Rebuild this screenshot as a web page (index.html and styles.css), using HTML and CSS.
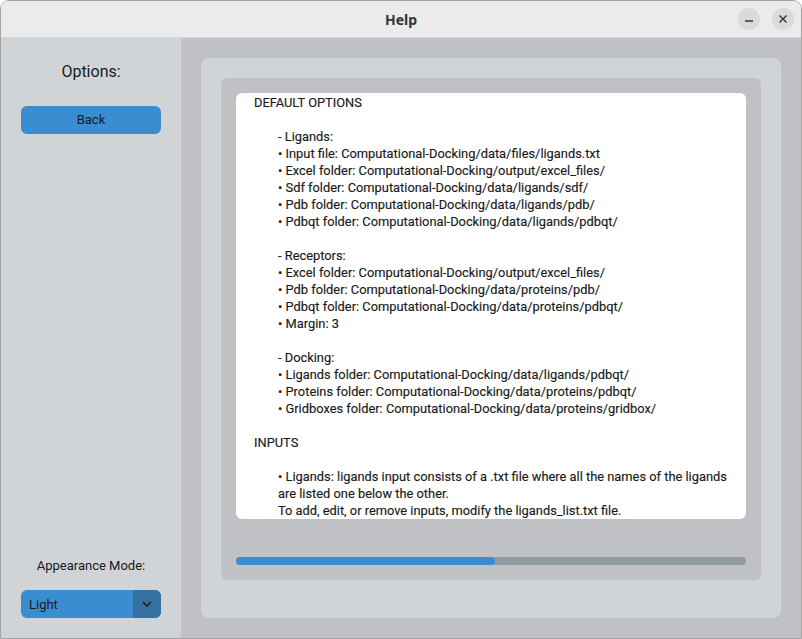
FILE: index.html
```html
<!DOCTYPE html>
<html>
<head>
<meta charset="utf-8">
<link rel="stylesheet" href="styles.css">
</head>
<body>
<div class="window">
  <div class="titlebar">
    <span class="title">Help</span>
    <div class="controls">
      <span class="ctl"><svg width="10" height="10" viewBox="0 0 10 10"><line x1="1" y1="7" x2="9" y2="7" stroke="#333" stroke-width="1.4"/></svg></span>
      <span class="ctl"><svg width="10" height="10" viewBox="0 0 10 10"><path d="M1.5 1.5 L8.5 8.5 M8.5 1.5 L1.5 8.5" stroke="#333" stroke-width="1.4" fill="none"/></svg></span>
    </div>
  </div>
  <div class="body">
    <aside class="sidebar">
      <div class="side-title">Options:</div>
      <div class="btn">Back</div>
      <div class="spacer"></div>
      <div class="mode-label">Appearance Mode:</div>
      <div class="select">
        <span class="select-text">Light</span>
        <span class="select-arrow"><svg width="10" height="6" viewBox="0 0 10 6"><path d="M1 1 L5 5 L9 1" stroke="#1a1a1a" stroke-width="1.5" fill="none"/></svg></span>
      </div>
    </aside>
    <main class="content">
      <div class="frame">
        <div class="inner">
          <div class="textbox">
            <div class="line h">DEFAULT OPTIONS</div>
            <div class="line"></div>
            <div class="line ind">- Ligands:</div>
            <div class="line ind">• Input file: Computational-Docking/data/files/ligands.txt</div>
            <div class="line ind">• Excel folder: Computational-Docking/output/excel_files/</div>
            <div class="line ind">• Sdf folder: Computational-Docking/data/ligands/sdf/</div>
            <div class="line ind">• Pdb folder: Computational-Docking/data/ligands/pdb/</div>
            <div class="line ind">• Pdbqt folder: Computational-Docking/data/ligands/pdbqt/</div>
            <div class="line"></div>
            <div class="line ind">- Receptors:</div>
            <div class="line ind">• Excel folder: Computational-Docking/output/excel_files/</div>
            <div class="line ind">• Pdb folder: Computational-Docking/data/proteins/pdb/</div>
            <div class="line ind">• Pdbqt folder: Computational-Docking/data/proteins/pdbqt/</div>
            <div class="line ind">• Margin: 3</div>
            <div class="line"></div>
            <div class="line ind">- Docking:</div>
            <div class="line ind">• Ligands folder: Computational-Docking/data/ligands/pdbqt/</div>
            <div class="line ind">• Proteins folder: Computational-Docking/data/proteins/pdbqt/</div>
            <div class="line ind">• Gridboxes folder: Computational-Docking/data/proteins/gridbox/</div>
            <div class="line"></div>
            <div class="line h">INPUTS</div>
            <div class="line"></div>
            <div class="line ind">• Ligands: ligands input consists of a .txt file where all the names of the ligands</div>
            <div class="line ind">are listed one below the other.</div>
            <div class="line ind">To add, edit, or remove inputs, modify the ligands_list.txt file.</div>
            <div class="line ind">&nbsp;</div>
          </div>
          <div class="progress"><div class="fill" style="width:50.8%"></div></div>
        </div>
      </div>
    </main>
  </div>
</div>
</body>
</html>
```

FILE: styles.css
```css
* { box-sizing: border-box; }
html, body { margin: 0; padding: 0; background: #ffffff; }
.window {
  width: 802px;
  height: 639px;
  border: 1px solid #a3a3a3;
  border-radius: 9px 9px 0 0;
  overflow: hidden;
  display: flex;
  flex-direction: column;
  font-family: Roboto, "Liberation Sans", sans-serif;
  color: #1a1a1a;
}
.titlebar {
  height: 37px;
  flex: none;
  background: #ebebeb;
  border-bottom: 1px solid #d6d6d6;
  display: flex;
  align-items: center;
  justify-content: center;
  position: relative;
}
.title {
  font-family: "Noto Sans", sans-serif;
  font-weight: 700;
  font-size: 14px;
  color: #333333;
}
.controls {
  position: absolute;
  right: 7px;
  top: 7px;
  display: flex;
  gap: 12px;
}
.ctl {
  width: 22px;
  height: 22px;
  border-radius: 50%;
  background: #dadada;
  display: flex;
  align-items: center;
  justify-content: center;
}
.body {
  flex: 1;
  display: flex;
  min-height: 0;
}
.sidebar {
  width: 180px;
  flex: none;
  background: #d1d4d7;
  display: flex;
  flex-direction: column;
  align-items: center;
  padding: 24px 0 20px;
}
.side-title {
  font-size: 16px;
  line-height: 20px;
  height: 20px;
}
.btn {
  margin-top: 24px;
  width: 140px;
  height: 28px;
  border-radius: 6px;
  background: #3a8dd0;
  font-size: 13px;
  display: flex;
  align-items: center;
  justify-content: center;
  padding-bottom: 1px;
}
.spacer { flex: 1; }
.mode-label {
  font-size: 13px;
  line-height: 16px;
  padding-top: 1px;
}
.select {
  margin-top: 16px;
  width: 140px;
  height: 28px;
  border-radius: 6px;
  background: #3a8dd0;
  display: flex;
  overflow: hidden;
}
.select-text {
  flex: 1;
  font-size: 13px;
  display: flex;
  align-items: center;
  padding-left: 8px;
}
.select-arrow {
  width: 28px;
  background: #36719f;
  display: flex;
  align-items: center;
  justify-content: center;
}
.content {
  flex: 1;
  background: #c0c1c4;
  padding: 20px;
}
.frame {
  height: 100%;
  background: #d1d4d7;
  border-radius: 8px;
  padding: 20px 20px 38px;
}
.inner {
  height: 100%;
  background: #c0c1c4;
  border-radius: 6px;
  padding: 15px;
  display: flex;
  flex-direction: column;
}
.textbox {
  height: 426px;
  flex: none;
  background: #ffffff;
  border-radius: 6px;
  overflow: hidden;
  padding: 1px 10px 0 18px;
}
.line {
  font-size: 12.85px;
  line-height: 17px;
  height: 17px;
  white-space: nowrap;
  -webkit-text-stroke: 0.15px #1a1a1a;
}
.line.ind { padding-left: 24px; }
.progress {
  margin-top: 38px;
  height: 8px;
  border-radius: 4px;
  background: #939ba2;
  overflow: hidden;
}
.fill {
  height: 100%;
  background: #3a8dd0;
  border-radius: 4px;
}
```
